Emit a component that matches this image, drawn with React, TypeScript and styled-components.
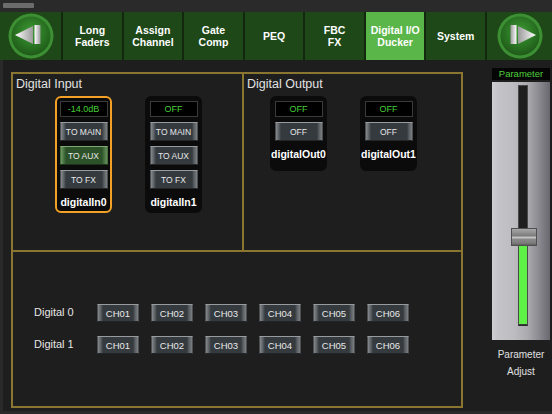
import React from 'react';
import styled, { createGlobalStyle } from 'styled-components';

const Global = createGlobalStyle`
  html, body { margin: 0; padding: 0; background: #2a2a2a; }
  body {
    width: 552px; height: 414px; overflow: hidden;
    font-family: "Liberation Sans", Arial, Helvetica, sans-serif;
  }
  #root { width: 552px; height: 414px; }
`;

const Screen = styled.div`
  width: 552px;
  height: 414px;
  display: flex;
  flex-direction: column;
  background: #2a2a2a;
`;

const StatusStrip = styled.div`
  height: 12px;
  flex: none;
  box-sizing: border-box;
  padding: 3px 0 0 3px;
`;

const Pill = styled.div`
  width: 31px;
  height: 5px;
  background: #6c6c6c;
  border-radius: 1px;
`;

const NavBar = styled.nav`
  height: 48px;
  flex: none;
  display: grid;
  grid-template-columns: 61px repeat(7, 1fr) 65px;
  column-gap: 2px;
  background: #13270e;
`;

const NavArrowCell = styled.div`
  background: #1e4817;
  display: flex;
  align-items: center;
  justify-content: center;
`;

const Tab = styled.div<{ $active?: boolean }>`
  background: ${(p) => (p.$active ? '#5bb64a' : '#1e4817')};
  color: #ffffff;
  font-weight: 700;
  font-size: 10.5px;
  line-height: 12px;
  text-align: center;
  display: flex;
  align-items: center;
  justify-content: center;
  white-space: pre-line;
`;

const Main = styled.main`
  flex: 1;
  margin: 0 0 3px 3px;
  background: #1e1e1e;
  box-sizing: border-box;
  padding: 8px 2px 0 8px;
  display: flex;
  gap: 29px;
  min-height: 0;
`;

const Panel = styled.section`
  margin-top: 4px;
  width: 452px;
  height: 336px;
  box-sizing: border-box;
  border: 2px solid #8a7631;
  display: grid;
  grid-template-rows: 178px 1fr;
`;

const TopRow = styled.div`
  display: grid;
  grid-template-columns: 231px 1fr;
  border-bottom: 2px solid #8a7631;
`;

const Section = styled.div<{ $divider?: boolean; $indent: number }>`
  border-right: ${(p) => (p.$divider ? '2px solid #8a7631' : 'none')};
  display: flex;
  flex-direction: column;
  padding: 2px 0 0 3px;
  --indent: ${(p) => p.$indent}px;
`;

const SectionTitle = styled.div`
  color: #e2e2e2;
  font-size: 12.5px;
  line-height: 16px;
`;

const CardRow = styled.div`
  display: flex;
  align-items: flex-start;
  gap: 33px;
  margin-top: 4px;
  padding-left: var(--indent);
`;

const Card = styled.div<{ $selected?: boolean; $bottom: number }>`
  width: 57px;
  box-sizing: border-box;
  border: 2px solid ${(p) => (p.$selected ? '#f3a027' : '#0b0b0b')};
  border-radius: 6px;
  background: #0b0b0b;
  padding: 3px 0 ${(p) => p.$bottom}px;
  display: flex;
  flex-direction: column;
  align-items: center;
  gap: 5px;
`;

const Display = styled.div`
  width: 48px;
  height: 16px;
  box-sizing: border-box;
  background: #000;
  border: 1px solid #3b3b3b;
  color: #46cf39;
  font-size: 9px;
  display: flex;
  align-items: center;
  justify-content: center;
`;

const Key = styled.div<{ $active?: boolean; $w: number; $h: number; $fs: number }>`
  width: ${(p) => p.$w}px;
  height: ${(p) => p.$h}px;
  box-sizing: border-box;
  display: flex;
  align-items: center;
  justify-content: center;
  color: #e8e8e8;
  font-size: ${(p) => p.$fs}px;
  border: 1px solid ${(p) => (p.$active ? '#456f3d' : '#4b4f52')};
  border-top-color: ${(p) => (p.$active ? '#7fa874' : '#979b9e')};
  border-bottom-color: ${(p) => (p.$active ? '#1d3319' : '#222528')};
  background: ${(p) =>
    p.$active
      ? 'linear-gradient(to right, #6f9766 0px, #45703d 3px, #2d5229 5px, #2d5229 calc(100% - 5px), #45703d calc(100% - 3px), #668e5d 100%)'
      : 'linear-gradient(to right, #868a8d 0px, #595e62 3px, #353a3f 5px, #353a3f calc(100% - 5px), #595e62 calc(100% - 3px), #7b7f82 100%)'};
`;

const CardLabel = styled.div`
  margin-top: 1px;
  color: #ffffff;
  font-weight: 700;
  font-size: 10.5px;
  line-height: 14px;
`;

const Routing = styled.div`
  display: flex;
  align-items: center;
  padding-left: 21px;
`;

const RouteGrid = styled.div`
  display: grid;
  grid-template-columns: 51px repeat(6, 42px);
  column-gap: 12px;
  row-gap: 14px;
  align-items: center;
`;

const RouteLabel = styled.div`
  color: #e6e6e6;
  font-size: 11px;
  line-height: 14px;
  margin-top: -2px;
`;

const SideColumn = styled.aside`
  width: 58px;
  display: flex;
  flex-direction: column;
  align-items: stretch;
`;

const ParamHeader = styled.div`
  height: 12px;
  background: #050505;
  color: #4fd03c;
  font-size: 9.5px;
  line-height: 12px;
  text-align: center;
`;

const FaderBody = styled.div`
  margin-top: 2px;
  height: 258px;
  box-sizing: border-box;
  padding: 3px 0 14px 26px;
  background: linear-gradient(to right, #cfcfd3 0px, #c3c3c8 6px, #bcbcc1 22px, #a9a9ae 36px, #8d8d93 46px, #68686e 100%);
  display: flex;
`;

const Slot = styled.div`
  position: relative;
  width: 10px;
  box-sizing: border-box;
  background: #1f1f1f;
  border: 1px solid #4a4a4a;
  border-bottom-color: #2a2a2a;
`;

const Fill = styled.div`
  position: absolute;
  left: 0;
  right: 0;
  bottom: 0;
  background: #5ff047;
  border-bottom: 1px solid #3a3a3a;
`;

const Knob = styled.div`
  position: absolute;
  left: -8px;
  width: 26px;
  height: 18px;
  box-sizing: border-box;
  border: 1px solid #505050;
  background: linear-gradient(
    to bottom,
    #a7a7a7 0px, #8e8e8e 4px, #7b7b7b 7px, #c2c2c2 8px, #c2c2c2 9px,
    #8a8a8a 10px, #7d7d7d 14px, #5e5e5e 100%
  );
`;

const SideLabel = styled.div`
  margin-top: 6px;
  color: #e0e0e0;
  font-size: 10px;
  line-height: 17px;
  text-align: center;
`;

const NavArrow: React.FC<{ dir: 'left' | 'right' }> = ({ dir }) => {
  const id = `g-${dir}`;
  return (
    <svg width="46" height="46" viewBox="0 0 46 46">
      <defs>
        <radialGradient id={`${id}-disc`} cx="50%" cy="40%" r="60%">
          <stop offset="0%" stopColor="#3f9a35" />
          <stop offset="60%" stopColor="#2a7523" />
          <stop offset="100%" stopColor="#1f5a19" />
        </radialGradient>
        <linearGradient id={`${id}-ico`} x1="0" y1="0" x2="1" y2="0">
          <stop offset="0%" stopColor="#ffffff" />
          <stop offset="100%" stopColor="#9a9a9a" />
        </linearGradient>
      </defs>
      <circle cx="23" cy="23" r="22.5" fill="#3d8f34" />
      <circle cx="23" cy="23" r="19.5" fill={`url(#${id}-disc)`} />
      <g transform={dir === 'right' ? 'translate(46 0) scale(-1 1)' : undefined}>
        <polygon points="7,22 25,13 25,31" fill={`url(#${id}-ico)`} />
        <rect x="26.5" y="12" width="6" height="19" fill={`url(#${id}-ico)`} />
      </g>
    </svg>
  );
};

const tabs = ['Long\nFaders', 'Assign\nChannel', 'Gate\nComp', 'PEQ', 'FBC\nFX', 'Digital I/O\nDucker', 'System'];

const inputs = [
  { name: 'digitalIn0', level: '-14.0dB', selected: true, aux: true },
  { name: 'digitalIn1', level: 'OFF', selected: false, aux: false },
];

const outputs = ['digitalOut0', 'digitalOut1'];
const channels = ['CH01', 'CH02', 'CH03', 'CH04', 'CH05', 'CH06'];

export default function App() {
  const value = 0.336;
  return (
    <>
      <Global />
      <Screen>
        <StatusStrip>
          <Pill />
        </StatusStrip>
        <NavBar>
          <NavArrowCell>
            <NavArrow dir="left" />
          </NavArrowCell>
          {tabs.map((t) => (
            <Tab key={t} $active={t.startsWith('Digital')}>
              {t}
            </Tab>
          ))}
          <NavArrowCell>
            <NavArrow dir="right" />
          </NavArrowCell>
        </NavBar>
        <Main>
          <Panel>
            <TopRow>
              <Section $divider $indent={39}>
                <SectionTitle>Digital Input</SectionTitle>
                <CardRow>
                  {inputs.map((c) => (
                    <Card key={c.name} $selected={c.selected} $bottom={2}>
                      <Display>{c.level}</Display>
                      <Key $w={48} $h={19} $fs={8.5}>TO MAIN</Key>
                      <Key $w={48} $h={19} $fs={8.5} $active={c.aux}>TO AUX</Key>
                      <Key $w={48} $h={19} $fs={8.5}>TO FX</Key>
                      <CardLabel>{c.name}</CardLabel>
                    </Card>
                  ))}
                </CardRow>
              </Section>
              <Section $indent={23}>
                <SectionTitle>Digital Output</SectionTitle>
                <CardRow>
                  {outputs.map((n) => (
                    <Card key={n} $bottom={8}>
                      <Display>OFF</Display>
                      <Key $w={48} $h={19} $fs={8.5}>OFF</Key>
                      <CardLabel>{n}</CardLabel>
                    </Card>
                  ))}
                </CardRow>
              </Section>
            </TopRow>
            <Routing>
              <RouteGrid>
                {['Digital 0', 'Digital 1'].map((row) => (
                  <React.Fragment key={row}>
                    <RouteLabel>{row}</RouteLabel>
                    {channels.map((ch) => (
                      <Key key={ch} $w={42} $h={18} $fs={9.5}>
                        {ch}
                      </Key>
                    ))}
                  </React.Fragment>
                ))}
              </RouteGrid>
            </Routing>
          </Panel>
          <SideColumn>
            <ParamHeader>Parameter</ParamHeader>
            <FaderBody>
              <Slot>
                <Fill style={{ height: `${value * 100}%` }} />
                <Knob style={{ bottom: `calc(${value * 100}% - 1px)` }} />
              </Slot>
            </FaderBody>
            <SideLabel>
              Parameter
              <br />
              Adjust
            </SideLabel>
          </SideColumn>
        </Main>
      </Screen>
    </>
  );
}
